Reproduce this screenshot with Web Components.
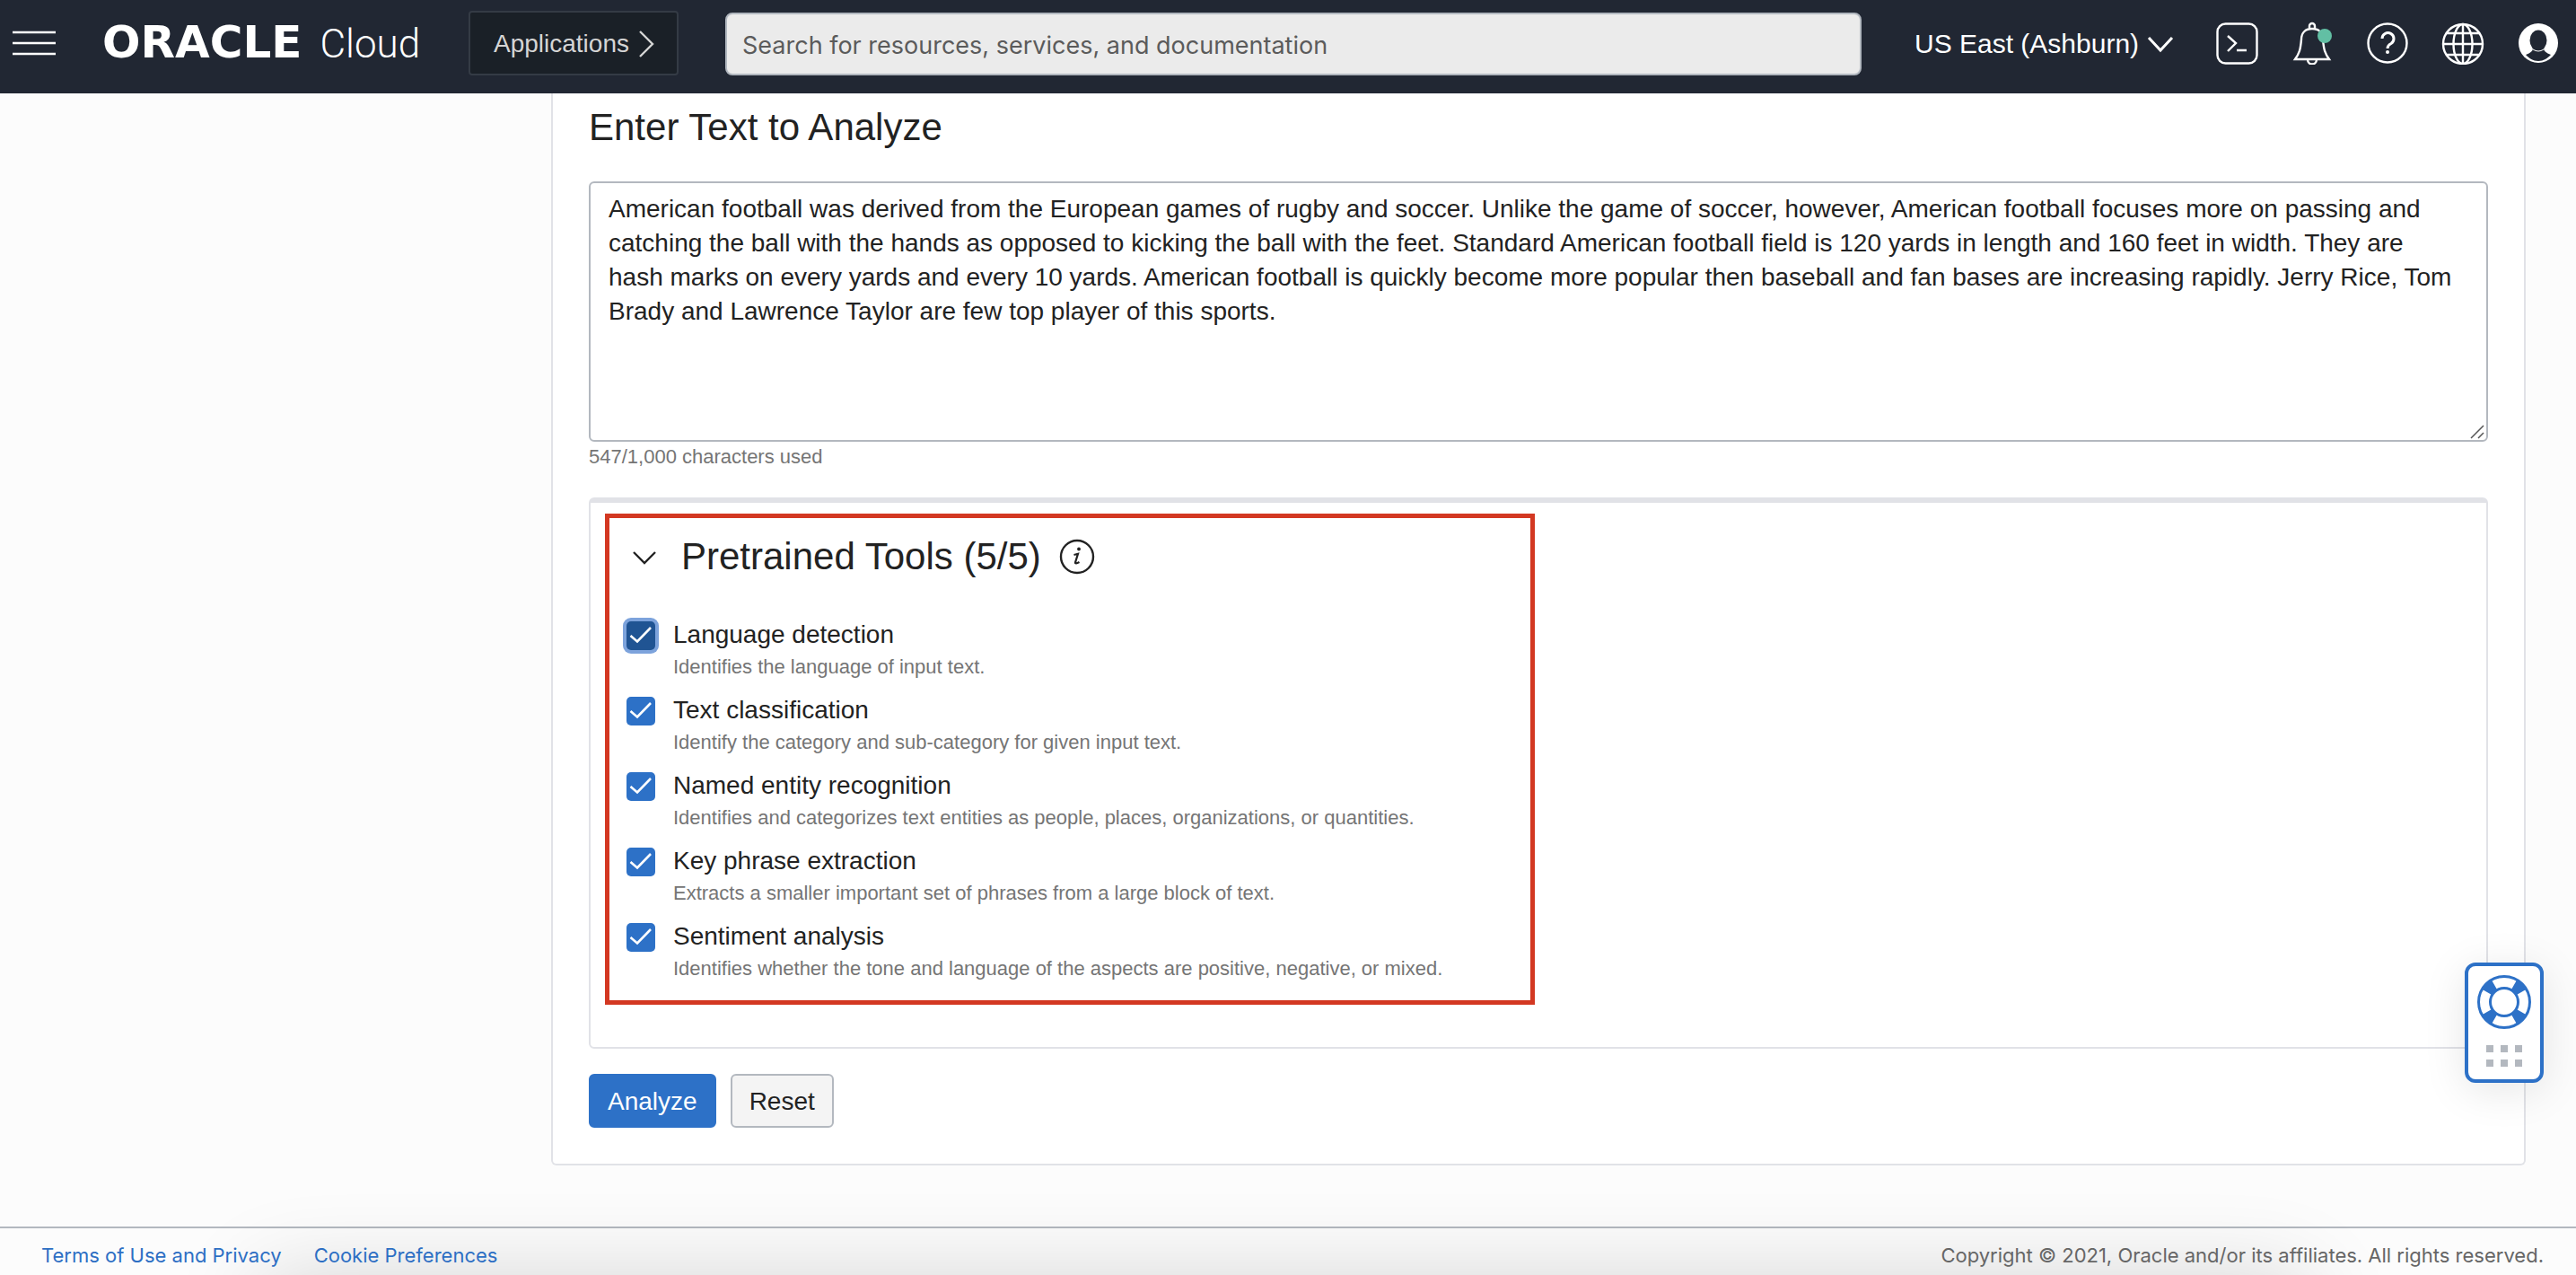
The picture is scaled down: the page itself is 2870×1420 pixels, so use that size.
<!DOCTYPE html>
<html lang="en">
<head>
<meta charset="utf-8">
<title>Oracle Cloud - Text Analytics</title>
<style>
  body { margin: 0; font-family: "Liberation Sans", Arial, sans-serif; color: #222; background: #fcfcfc; }
</style>
</head>
<body>
<cloud-app>
  <cloud-header slot="header"></cloud-header>
  <analyze-panel>
    <text-entry></text-entry>
    <tool-card>
      <tool-option focused>Language detection<span slot="hint">Identifies the language of input text.</span></tool-option>
      <tool-option>Text classification<span slot="hint">Identify the category and sub-category for given input text.</span></tool-option>
      <tool-option>Named entity recognition<span slot="hint">Identifies and categorizes text entities as people, places, organizations, or quantities.</span></tool-option>
      <tool-option>Key phrase extraction<span slot="hint">Extracts a smaller important set of phrases from a large block of text.</span></tool-option>
      <tool-option>Sentiment analysis<span slot="hint">Identifies whether the tone and language of the aspects are positive, negative, or mixed.</span></tool-option>
    </tool-card>
    <cloud-button slot="actions" primary>Analyze</cloud-button>
    <cloud-button slot="actions">Reset</cloud-button>
  </analyze-panel>
  <cloud-footer slot="footer"></cloud-footer>
  <help-widget slot="help"></help-widget>
</cloud-app>

<script>
const define = (name, html) => {
  const template = document.createElement('template');
  template.innerHTML = html;
  customElements.define(name, class extends HTMLElement {
    constructor() {
      super();
      this.attachShadow({ mode: 'open' }).append(template.content.cloneNode(true));
    }
  });
};

define('cloud-app', `
<style>
  :host { display: flex; flex-direction: column; min-height: 100vh; position: relative; }
  main { display: flex; flex-direction: column; padding: 0 56px 68px 614px; }
  ::slotted([slot=footer]) { margin-top: auto; }
</style>
<slot name="header"></slot>
<main><slot></slot></main>
<slot name="footer"></slot>
<slot name="help"></slot>`);

define('cloud-logo', `
<style>
  :host { display: flex; align-items: baseline; gap: 20px; color: #fff; line-height: 56px; white-space: nowrap; }
  .brand { font: bold 50px/56px "DejaVu Sans", sans-serif; }
  .product { font: 300 44px/56px Roboto, sans-serif; }
</style>
<span class="brand">ORACLE</span><span class="product">Cloud</span>`);

define('cloud-header', `
<style>
  :host { display: flex; align-items: center; height: 96px; padding: 0 18px 8px 14px; background: #212733; color: #fff; }
  button { font: inherit; color: inherit; background: none; border: 0; padding: 0; display: flex; }
  .menu { margin-right: 52px; }
  cloud-logo { flex: 0 0 408px; }
  .apps { box-sizing: border-box; width: 234px; height: 72px; align-items: center; gap: 10px; padding: 2px 0 0 26px; margin-right: 52px;
    border: 2px solid #343b45; border-radius: 4px; background: #1a2027; color: #d5d5d5; font-size: 28px; }
  input { flex: 1; min-width: 0; box-sizing: border-box; height: 70px; padding: 2px 17px 0; margin-top: 2px; border: 2px solid #b1b7bf; border-radius: 8px;
    background: #ebebeb; font: 27px Inter, sans-serif; color: #5b5b5b; }
  input::placeholder { color: #5b5b5b; opacity: 1; }
  .region { display: flex; align-items: center; gap: 8px; margin: 2px 46px 0 59px; }
  select { appearance: none; border: 0; background: none; padding: 0; margin: 0; font: 30px/36px "Liberation Sans", sans-serif; color: #fff; }
  .icons { display: flex; gap: 36px; }
  svg { display: block; fill: none; stroke: #fff; stroke-width: 2.4; }
</style>
<button class="menu" aria-label="Navigation menu"><svg width="48" height="28"><path d="M0 2h48M0 14h48M0 26h48"/></svg></button>
<cloud-logo></cloud-logo>
<button class="apps">Applications<svg width="18" height="32" style="stroke:#d5d5d5"><path d="M2 2L16 16L2 30"/></svg></button>
<input type="search" aria-label="Search" placeholder="Search for resources, services, and documentation">
<div class="region">
  <select aria-label="Region"><option>US East (Ashburn)</option></select>
  <svg width="30" height="20" style="stroke-width:3"><path d="M2 3L15 17L28 3"/></svg>
</div>
<div class="icons">
  <button aria-label="Developer tools"><svg width="48" height="48"><rect x="2.500" y="2.500" width="44" height="44" rx="9"/><path d="M14 16L23 24L14 33M24 32h11"/></svg></button>
  <button aria-label="Announcements"><svg width="48" height="48"><path d="M21 8V5a3 3 0 0 1 6 0V8M5 42H43C38 35 37 31 36 20C36 12 31 8 24 8S12 12 12 20C11 31 10 35 5 42ZM19 42a5 5.500 0 0 0 10 0"/><circle cx="38" cy="16" r="8" fill="#62bfa4" stroke="none"/></svg></button>
  <button aria-label="Help"><svg width="48" height="48"><circle cx="24" cy="24" r="21.500"/><path d="M18 19a6.500 6.500 0 1 1 10 5.500C25 26 24 27.500 24 30" stroke-width="3"/><circle cx="24" cy="34" r="2" fill="#fff" stroke="none"/></svg></button>
  <button aria-label="Language"><svg width="48" height="48"><circle cx="24" cy="25" r="22"/><ellipse cx="24" cy="25" rx="10.500" ry="22"/><path d="M24 3V47M2 25H46M6 13H42M6 37H42"/></svg></button>
  <button aria-label="Profile"><svg width="48" height="48"><circle cx="24" cy="24" r="22" fill="#fff" stroke="none"/><ellipse cx="24" cy="21" rx="9.500" ry="11.500" fill="#212733" stroke="none"/><path d="M18 30Q18 34 10 37C14 41 18 44 24 44S34 41 38 37Q30 34 30 30Q24 34 18 30Z" fill="#212733" stroke="none"/><path d="M18 31q6 4 12 0" stroke-width="1"/></svg></button>
</div>`);

define('analyze-panel', `
<style>
  :host { display: flex; flex-direction: column; padding: 14px 40px 40px; background: #fff; border: 2px solid #e1e2e7; border-top: 0; border-radius: 0 0 6px 6px; }
  .actions { display: flex; gap: 16px; margin-top: 28px; }
</style>
<slot></slot>
<div class="actions"><slot name="actions"></slot></div>`);

define('text-entry', `
<style>
  :host { display: block; margin-bottom: 31px; }
  label { display: block; font-size: 42px; line-height: 48px; margin-bottom: 36px; }
  .box { position: relative; display: flex; }
  textarea { flex: 1; box-sizing: border-box; height: 290px; margin: 0; padding: 10px 34px 10px 20px; border: 2px solid #b3b8bf; border-radius: 6px; resize: none;
    overflow: hidden; background: #fff; font: 28px/38px "Liberation Sans", Arial, sans-serif; color: #222; }
  .grip { position: absolute; right: 4px; bottom: 3px; stroke: #555; stroke-width: 1.500; }
  p { margin: 3px 0 0; font-size: 22px; line-height: 28px; color: #757575; }
</style>
<label for="text">Enter Text to Analyze</label>
<div class="box">
  <textarea id="text">American football was derived from the European games of rugby and soccer. Unlike the game of soccer, however, American football focuses more on passing and catching the ball with the hands as opposed to kicking the ball with the feet. Standard American football field is 120 yards in length and 160 feet in width. They are hash marks on every yards and every 10 yards. American football is quickly become more popular then baseball and fan bases are increasing rapidly. Jerry Rice, Tom Brady and Lawrence Taylor are few top player of this sports.</textarea>
  <svg class="grip" width="16" height="16"><path d="M1 15L15 1M9 15L15 9"/></svg>
</div>
<p>547/1,000 characters used</p>`);

define('tool-card', `
<style>
  :host { display: block; padding: 12px 16px 47px; border: 2px solid #e1e2e7; border-top-width: 6px; border-radius: 6px; }
  section { box-sizing: border-box; max-width: 1036px; padding: 19px 19px 21px; border: 5px solid #d33822; }
  header { display: flex; align-items: center; margin-bottom: 44px; }
  h2 { margin: 0 20px 0 26px; font-size: 42px; line-height: 48px; font-weight: normal; }
  button { display: flex; padding: 0; border: 0; background: none; }
  .toggle { margin-left: 5px; }
  svg { fill: none; stroke: #222; stroke-width: 2.4; }
  .list { display: flex; flex-direction: column; gap: 15px; }
</style>
<section>
  <header>
    <button class="toggle" aria-label="Collapse"><svg width="30" height="18"><path d="M3 4L15 16L27 4"/></svg></button>
    <h2>Pretrained Tools (5/5)</h2>
    <button aria-label="More information"><svg width="40" height="40"><circle cx="20" cy="20" r="18"/><path d="M16.500 18L21 16.800L18 26.500Q17.800 28.500 22.500 26" stroke-width="2.200"/><circle cx="22" cy="11.500" r="1.900" fill="#222" stroke="none"/></svg></button>
  </header>
  <div class="list"><slot></slot></div>
</section>`);

define('tool-option', `
<style>
  :host { display: grid; grid-template-columns: 32px 1fr; column-gap: 20px; row-gap: 3px; }
  input, svg { grid-area: 1 / 1; width: 32px; height: 32px; margin: 4px 0 0; }
  input { appearance: none; border-radius: 5px; background: #2d71c7; }
  :host([focused]) input { background: #205493; box-shadow: 0 0 0 4px #7da3dc; }
  svg { fill: none; stroke: #fff; stroke-width: 2.600; pointer-events: none; z-index: 1; }
  label { grid-area: 1 / 2; font-size: 28px; line-height: 38px; }
  .hint { grid-area: 2 / 2; font-size: 22px; line-height: 28px; color: #757575; }
</style>
<input type="checkbox" id="box" checked aria-describedby="hint">
<svg viewBox="0 0 32 32"><path d="M4.500 16L12 22.500L27 7"/></svg>
<label for="box"><slot></slot></label>
<div class="hint" id="hint"><slot name="hint"></slot></div>`);

define('cloud-button', `
<style>
  :host { display: block; }
  button { display: block; box-sizing: border-box; height: 60px; padding: 2px 19px 0; border: 2px solid #b3b8bf; border-radius: 6px; background: #f4f4f4; font: 28px "Liberation Sans", Arial, sans-serif; color: #222; }
  :host([primary]) button { background: #2d71c7; border-color: #2d71c7; color: #fff; }
</style>
<button type="button"><slot></slot></button>`);

define('cloud-footer', `
<style>
  :host { display: flex; align-items: center; gap: 36px; box-sizing: border-box; height: 54px; padding: 7px 36px 0 46px;
    border-top: 2px solid #b3b8bf; position: relative; font: 22px/28px Inter, sans-serif; color: #666; }
  a { color: #2d6fc4; text-decoration: none; position: relative; }
  span { margin-left: auto; position: relative; }
  .shade { position: absolute; left: 0; right: 0; bottom: 0; height: 120px; overflow: hidden; pointer-events: none; }
  .shade::after { content: ""; position: absolute; left: 290px; right: 300px; top: 124px; height: 200px; box-shadow: 0 0 100px rgba(0,0,0,.16); }
</style>
<div class="shade"></div>
<a href="#terms">Terms of Use and Privacy</a>
<a href="#cookies">Cookie Preferences</a>
<span>Copyright © 2021, Oracle and/or its affiliates. All rights reserved.</span>`);

define('help-widget', `
<style>
  :host { position: fixed; right: 36px; bottom: 214px; }
  button { box-sizing: border-box; display: flex; flex-direction: column; align-items: center; gap: 18px; width: 88px; height: 134px; padding: 10px 0 0;
    border: 4px solid #2d71c7; border-radius: 12px; background: #fff; box-shadow: 0 8px 48px rgba(0,0,0,.1); }
  svg { display: block; flex: none; }
</style>
<button aria-label="Support">
  <svg width="60" height="60" fill="none" stroke="#2d71c7">
    <circle cx="30" cy="30" r="28.500" stroke-width="3"/>
    <circle cx="30" cy="30" r="15.500" stroke-width="3"/>
    <circle cx="30" cy="30" r="22" stroke-width="13" pathLength="360" stroke-dasharray="30 60" stroke-dashoffset="-30"/>
  </svg>
  <svg width="40" height="24" fill="#b3b8bf"><path d="M0 0h8v8H0zM16 0h8v8H16zM32 0h8v8H32zM0 16h8v8H0zM16 16h8v8H16zM32 16h8v8H32z"/></svg>
</button>`);
</script>
</body>
</html>
